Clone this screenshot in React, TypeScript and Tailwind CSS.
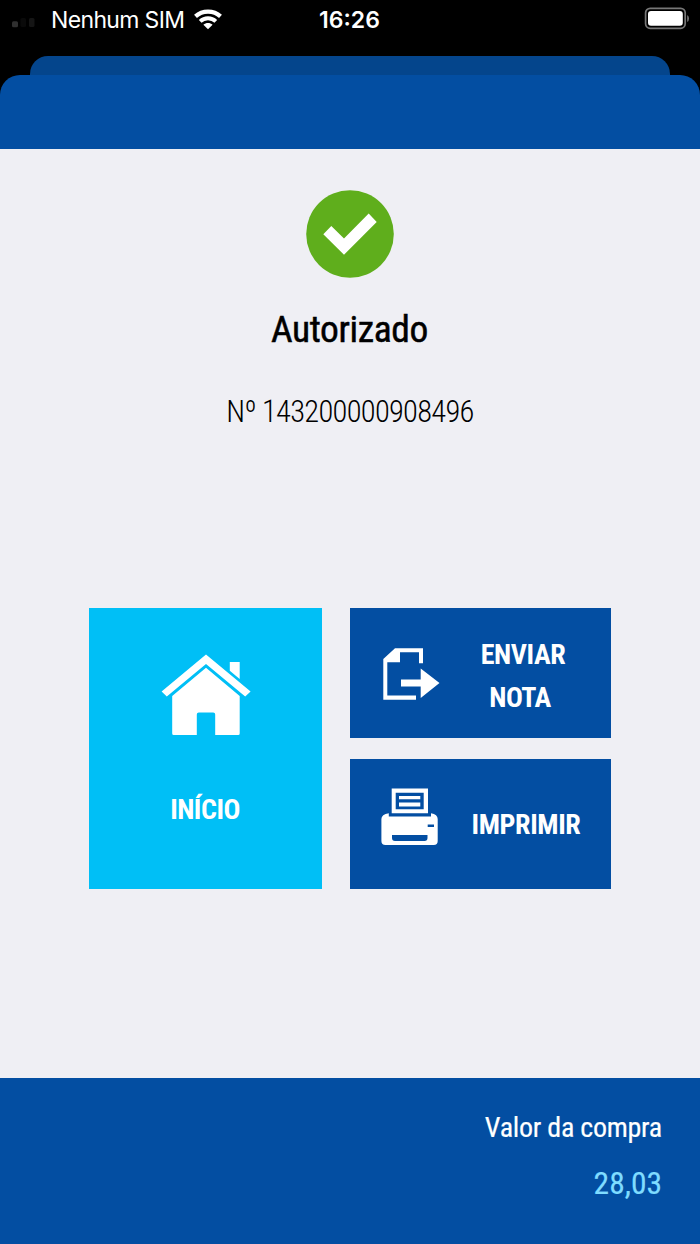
import React from 'react';

interface ActionButtonProps {
  icon: React.ReactNode;
  children: React.ReactNode;
}

function SignalIcon() {
  return (
    <svg width="24" height="12" viewBox="0 0 24 12">
      <rect x="1" y="4.2" width="6" height="6" rx="1.5" fill="#303030" />
      <rect x="9.5" y="1" width="5.5" height="9" rx="1.5" fill="#0a0a0a" />
      <rect x="18" y="1" width="5.5" height="9" rx="1.5" fill="#151515" />
    </svg>
  );
}

function WifiIcon() {
  return (
    <svg width="28" height="22" viewBox="0 0 28 22" fill="none" stroke="#fff">
      <path d="M1.5 7.4C8.4 0.9 19.6 0.9 26.5 7.4" strokeWidth="4.2" />
      <path d="M6.2 12.3C10.5 8.2 17.5 8.2 21.8 12.3" strokeWidth="3.9" />
      <path d="M14 20.3L9.4 15.8C12 13.4 16 13.4 18.6 15.8Z" fill="#fff" stroke="none" />
    </svg>
  );
}

function BatteryIcon() {
  return (
    <svg width="46" height="24" viewBox="0 0 46 24">
      <rect x="1.6" y="2.3" width="39.6" height="20" rx="4.5" fill="none" stroke="#777" strokeWidth="1.7" />
      <rect x="4" y="5" width="34.8" height="14.8" rx="3" fill="#fff" />
      <path d="M43.2 9v7q1.8-1 1.8-3.5T43.2 9Z" fill="#777" />
    </svg>
  );
}

function CheckIcon() {
  return (
    <svg width="88" height="88" viewBox="0 0 88 88">
      <circle cx="44" cy="44" r="43.8" fill="#5fae1c" />
      <path d="M17.3 44.3L25.3 36L38 48.5L62.7 23.5L70.7 32L38 64.7Z" fill="#fff" />
    </svg>
  );
}

function HomeIcon() {
  return (
    <svg width="90" height="82" viewBox="0 0 90 82" fill="#fff">
      <path d="M45 0.4L89.6 37.6L84.2 42.6L45 10L5.8 42.6L0.6 37.6Z" />
      <path d="M68.8 8H78.7V25L68.8 16.8Z" />
      <path d="M45 13.8L78.7 42V79.5Q78.7 81 77.2 81H54.2V60.5Q54.2 58.5 52.2 58.5H37.8Q35.8 58.5 35.8 60.5V81H12.7Q11.2 81 11.2 79.5V42Z" />
    </svg>
  );
}

function SendNoteIcon() {
  return (
    <svg width="57" height="53" viewBox="0 0 57 53" fill="#fff">
      <path d="M12 0.3H40V15.3H36V4.3H17V14.3H4.3V47.6H33V51.8H0.3V11Z" />
      <path d="M18 31.4H37.7V20.6L56.5 35L37.7 50V38.6H18Z" />
    </svg>
  );
}

function PrinterIcon() {
  return (
    <svg width="57" height="58" viewBox="0 0 57 58">
      <path
        fill="#fff"
        fillRule="evenodd"
        d="M10.7 0.5H47V25.2H10.7ZM14.7 4.7V21.3H42.7V4.7Z"
      />
      <path fill="#fff" d="M18 8H39.3V11.2H18ZM18 14.4H39.3V18.6H18Z" />
      <path
        fill="#fff"
        fillRule="evenodd"
        d="M7.8 25.2V28.6H50V25.2Q56.7 26.2 56.7 31V53Q56.7 57 52.7 57H4.5Q0.4 57 0.4 53V31Q0.4 26.2 7.8 25.2ZM46.7 36.5V39H53V36.5ZM11 47V50Q11 53 14 53H43.5Q46.5 53 46.5 50V47Z"
      />
    </svg>
  );
}

function ActionButton({ icon, children }: ActionButtonProps) {
  return (
    <button className="flex h-[130px] w-full items-center bg-[#034ea2] text-[28px] font-bold leading-[43px] tracking-[-0.4px] text-white">
      {icon}
      {children}
    </button>
  );
}

export default function App() {
  return (
    <div className="flex h-[1244px] w-[700px] flex-col overflow-hidden bg-black font-['Roboto_Condensed',Roboto,sans-serif] font-stretch-condensed">
      {/* Status bar */}
      <div className="grid h-14 shrink-0 grid-cols-3 items-start font-['Inter',sans-serif] font-stretch-normal text-white">
        <div className="flex h-10 items-center pl-[11px]">
          <span className="mt-1.5"><SignalIcon /></span>
          <span className="ml-4 w-[135px] whitespace-nowrap text-[23px] tracking-[-0.65px]">Nenhum SIM</span>
          <span className="ml-2"><WifiIcon /></span>
        </div>
        <div className="flex h-10 items-center justify-center pr-px text-[23px] font-semibold">16:26</div>
        <div className="flex justify-end pr-[10px] pt-1.5"><BatteryIcon /></div>
      </div>

      {/* Stacked sheets */}
      <div className="mx-[30px] h-[19px] shrink-0 rounded-t-[18px] bg-[#04458c]" />
      <div className="h-[74px] shrink-0 rounded-t-[20px] bg-[#034ea2]" />

      <main className="flex flex-1 flex-col items-center bg-[#efeff4] pt-[41px]">
        <CheckIcon />
        <h1 className="mt-[29px] pr-px text-[37.5px] font-normal leading-[44px] tracking-[-0.4px] text-black [-webkit-text-stroke:0.5px_black]">Autorizado</h1>
        <p className="mt-[43px] text-[30.5px] font-light leading-9 tracking-[-0.72px] text-black">Nº 143200000908496</p>

        <div className="mt-[178px] flex gap-7">
          <button className="flex h-[281px] w-[233px] flex-col items-center bg-[#00bff6] pt-[46px] text-[28px] font-bold leading-8 tracking-[-0.5px] text-white">
            <HomeIcon />
            <span className="mt-[58px] pr-px">INÍCIO</span>
          </button>
          <div className="flex w-[261px] flex-col gap-[21px]">
            <ActionButton icon={<span className="ml-[33px] mt-[2px]"><SendNoteIcon /></span>}>
              <span className="flex flex-1 flex-col items-center pr-[5px] pt-[5px]">
                <span>ENVIAR</span>
                <span className="pr-[6px]">NOTA</span>
              </span>
            </ActionButton>
            <ActionButton icon={<span className="mb-[14px] ml-[31px]"><PrinterIcon /></span>}>
              <span className="flex-1 pl-[3px] text-center">IMPRIMIR</span>
            </ActionButton>
          </div>
        </div>
      </main>

      <footer className="flex h-[166px] shrink-0 flex-col items-end bg-[#034ea2] pr-[38px] pt-[34px]">
        <span className="text-[28px] leading-8 tracking-[-0.25px] text-white [-webkit-text-stroke:0.2px_white]">Valor da compra</span>
        <span className="mt-[22px] text-[31.5px] leading-9 text-[#7fdcff] [-webkit-text-stroke:0.2px_#7fdcff]">28,03</span>
      </footer>
    </div>
  );
}
